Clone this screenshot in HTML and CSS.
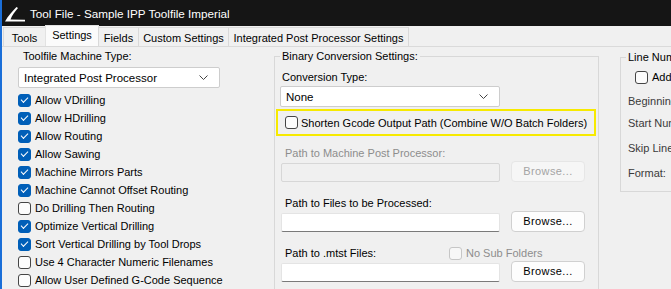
FILE: index.html
```html
<!DOCTYPE html>
<html lang="en">

<head>
    <meta charset="UTF-8">
    <meta name="viewport" content="width=device-width, initial-scale=1.0">
    <title>Tool File - Sample IPP Toolfile Imperial</title>

    <link rel="stylesheet" href="styles.css">

</head>

<body>

    <div class="window">

        <div class="titlebar">
            <svg class="app-icon" width="20" height="15" viewBox="0 0 20 15">
                <path d="M0 14.5 C3 9 7 4.5 11.5 0 L13 1 C9.5 5 7 8.5 5.5 12.5 L20 12.8 L20 14.5 Z" fill="#fff" />
            </svg>
            <span class="title">Tool File - Sample IPP Toolfile Imperial</span>
        </div>

        <div class="tabs">
            <div class="tab tab-tools">Tools</div>
            <div class="tab tab-settings active">Settings</div>
            <div class="tab tab-fields">Fields</div>
            <div class="tab tab-custom">Custom Settings</div>
            <div class="tab tab-ipp">Integrated Post Processor Settings</div>
        </div>

        <div class="page">

            <!-- coluna esquerda: tipo de maquina e opcoes -->
            <div class="col-left">
                <div class="label">Toolfile Machine Type:</div>
                <div class="combo machine-type">
                    <span>Integrated Post Processor</span>
                    <svg class="chevron" width="9" height="5" viewBox="0 0 9 5">
                        <path d="M0.5 0.5 L4.5 4.5 L8.5 0.5" fill="none" stroke="#444" />
                    </svg>
                </div>

                <ul class="checks">
                    <li><span class="cb on"></span>Allow VDrilling</li>
                    <li><span class="cb on"></span>Allow HDrilling</li>
                    <li><span class="cb on"></span>Allow Routing</li>
                    <li><span class="cb on"></span>Allow Sawing</li>
                    <li><span class="cb on"></span>Machine Mirrors Parts</li>
                    <li><span class="cb on"></span>Machine Cannot Offset Routing</li>
                    <li><span class="cb"></span>Do Drilling Then Routing</li>
                    <li><span class="cb on"></span>Optimize Vertical Drilling</li>
                    <li><span class="cb on"></span>Sort Vertical Drilling by Tool Drops</li>
                    <li><span class="cb"></span>Use 4 Character Numeric Filenames</li>
                    <li><span class="cb"></span>Allow User Defined G-Code Sequence</li>
                </ul>
            </div>

            <!-- conversao binaria -->
            <fieldset class="group binary">
                <legend>Binary Conversion Settings:</legend>

                <div class="label conv-label">Conversion Type:</div>
                <div class="combo conv-type">
                    <span>None</span>
                    <svg class="chevron" width="9" height="5" viewBox="0 0 9 5">
                        <path d="M0.5 0.5 L4.5 4.5 L8.5 0.5" fill="none" stroke="#444" />
                    </svg>
                </div>

                <div class="highlight">
                    <span class="cb"></span>Shorten Gcode Output Path (Combine W/O Batch Folders)
                </div>

                <div class="label path-label disabled">Path to Machine Post Processor:</div>
                <div class="path-row">
                    <div class="field disabled"></div>
                    <div class="button disabled">Browse...</div>
                </div>

                <div class="label path-label">Path to Files to be Processed:</div>
                <div class="path-row">
                    <div class="field"></div>
                    <div class="button">Browse...</div>
                </div>

                <div class="path-label label-row">
                    <span class="label mtst">Path to .mtst Files:</span>
                    <span class="cb disabled"></span>
                    <span class="label disabled">No Sub Folders</span>
                </div>
                <div class="path-row">
                    <div class="field"></div>
                    <div class="button">Browse...</div>
                </div>
            </fieldset>

            <!-- numeracao de linhas -->
            <fieldset class="group line-num">
                <legend>Line Numbering</legend>
                <div class="add-row"><span class="cb"></span>Add Line Numbers</div>
                <div class="label ln-begin">Beginning Character:</div>
                <div class="label ln-start">Start Number:</div>
                <div class="label ln-skip">Skip Line Count:</div>
                <div class="label ln-format">Format:</div>
            </fieldset>

        </div>

    </div>

</body>

</html>
```

FILE: styles.css
```css
body {
    margin: 0;
    font-family: 'Liberation Sans', Arial, sans-serif;
    font-size: 11px;
    color: #000;
    background-color: #f0f0f0;
    overflow: hidden;
}

.window {
    width: 669px;
    height: 289px;
    border-left: 2px solid #1a6ed8;
    overflow: hidden;
}

/* barra de titulo */
.titlebar {
    height: 26px;
    background-color: #151515;
    display: flex;
    align-items: center;
    padding-left: 3px;
}

.app-icon {
    margin-top: 2px;
}

.title {
    color: #fff;
    font-size: 11.7px;
    margin-left: 5px;
    margin-top: 1px;
}

/* separadores */
.tabs {
    height: 21px;
    display: flex;
    align-items: flex-end;
    padding-left: 1px;
    border-bottom: 1px solid #dadada;
    box-sizing: border-box;
}

.tab {
    height: 19px;
    line-height: 18px;
    padding-top: 1px;
    background-color: #f0f0f0;
    border: 1px solid #d9d9d9;
    border-bottom: none;
    box-sizing: border-box;
    margin-right: -1px;
    white-space: nowrap;
    text-align: center;
}

.tab-tools {
    width: 43px;
}

.tab-settings {
    width: 54px;
}

.tab-fields {
    width: 41px;
}

.tab-custom {
    width: 91px;
}

.tab-ipp {
    width: 181px;
}

.tab.active {
    height: 21px;
    line-height: 18px;
    padding-top: 0;
    background-color: #fbfbfb;
    border-color: #e2e2e2;
}

/* pagina */
.page {
    display: flex;
    align-items: flex-start;
    padding: 2px 0 0 16px;
}

.label {
    line-height: 14px;
    white-space: nowrap;
}

.label.disabled {
    color: #8d8d8d;
}

.col-left {
    width: 256px;
    flex: 0 0 256px;
}

.col-left > .label {
    margin-left: 5px;
}

.combo {
    height: 21px;
    box-sizing: border-box;
    background-color: #fff;
    border: 1px solid #cdcdcd;
    border-radius: 2px;
    display: flex;
    align-items: center;
    justify-content: space-between;
    padding: 0 11px 0 5px;
    font-size: 11.5px;
}

.machine-type {
    width: 202px;
    margin-top: 4px;
}

.checks {
    list-style: none;
    margin: 3px 0 0 0;
    padding: 0;
}

.checks li {
    height: 18px;
    display: flex;
    align-items: center;
    white-space: nowrap;
}

/* caixas de verificacao */
.cb {
    flex: 0 0 13px;
    width: 13px;
    height: 13px;
    box-sizing: border-box;
    border: 1px solid #454545;
    border-radius: 3px;
    background-color: #fcfcfc;
    margin-right: 4px;
    display: flex;
    align-items: center;
    justify-content: center;
}

.cb.on {
    background-color: #005fb8;
    border-color: #005fb8;
}

.cb.on::after {
    content: '';
    width: 6px;
    height: 3px;
    border-left: 1.3px solid #fff;
    border-bottom: 1.3px solid #fff;
    transform: rotate(-45deg);
    margin-top: -2px;
}

.cb.disabled {
    border-color: #c6c6c6;
    background-color: #f7f7f7;
}

/* caixas de grupo */
.group {
    margin: 0;
    padding: 0 0 0 1px;
    border: 1px solid #d8d8d8;
    box-sizing: border-box;
    min-width: 0;
}

.group legend {
    margin-left: 4px;
    padding: 0 2px;
    line-height: 14px;
    white-space: nowrap;
}

.binary {
    width: 325px;
    flex: 0 0 325px;
    height: 260px;
}

.conv-label {
    margin: 7px 0 0 6px;
}

.conv-type {
    width: 220px;
    margin: 2px 0 0 4px;
}

.highlight {
    width: 320px;
    height: 27px;
    box-sizing: border-box;
    border: 2px solid #f7ea00;
    margin-top: 2px;
    padding-left: 7px;
    display: flex;
    align-items: center;
    white-space: nowrap;
}

.highlight .cb {
    margin-right: 3px;
}

.path-label {
    margin: 10px 0 0 9px;
}

.path-row + .path-label {
    margin-top: 14px;
}

.label-row {
    display: flex;
    align-items: center;
    height: 14px;
}

.mtst {
    width: 164px;
}

.label-row .cb {
    margin-right: 4px;
}

.path-row {
    display: flex;
    align-items: flex-start;
    margin: 1px 0 0 5px;
}

.field {
    width: 219px;
    height: 19px;
    margin-top: 2px;
    box-sizing: border-box;
    background-color: #fff;
    border: 1px solid #e4e4e4;
    border-bottom: 1px solid #7a7a7a;
    border-radius: 2px;
}

.field.disabled {
    background-color: #f0f0f0;
    border: 1px solid #d7d7d7;
}

.button {
    width: 74px;
    height: 21px;
    margin-left: 11px;
    box-sizing: border-box;
    background-color: #fdfdfd;
    border: 1px solid #d0d0d0;
    border-radius: 4px;
    text-align: center;
    line-height: 19px;
    letter-spacing: 0.4px;
}

.button.disabled {
    background-color: #f6f6f6;
    border-color: #e6e6e6;
    color: #a4a4a4;
}

.line-num {
    width: 120px;
    flex: 0 0 120px;
    height: 142px;
    margin: 1px 0 0 21px;
    padding-left: 7px;
}

.line-num legend {
    margin-left: -2px;
}

.line-num .label {
    color: #3a3a3a;
}

.add-row {
    display: flex;
    align-items: center;
    height: 14px;
    margin: 6px 0 0 7px;
    white-space: nowrap;
}

.ln-begin {
    margin-top: 10px;
}

.ln-start {
    margin-top: 8px;
}

.ln-skip {
    margin-top: 11px;
}

.ln-format {
    margin-top: 11px;
}
```
